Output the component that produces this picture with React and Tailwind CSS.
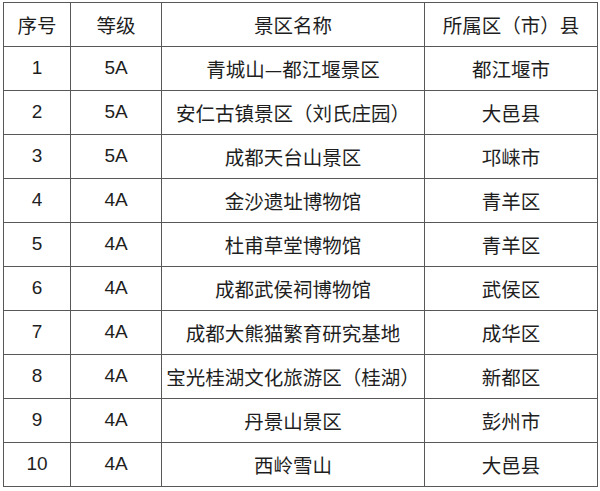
import React from "react";

const rows = [
  { id: 1, level: "5A", name: "青城山—都江堰景区", area: "都江堰市" },
  { id: 2, level: "5A", name: "安仁古镇景区（刘氏庄园）", area: "大邑县" },
  { id: 3, level: "5A", name: "成都天台山景区", area: "邛崃市" },
  { id: 4, level: "4A", name: "金沙遗址博物馆", area: "青羊区" },
  { id: 5, level: "4A", name: "杜甫草堂博物馆", area: "青羊区" },
  { id: 6, level: "4A", name: "成都武侯祠博物馆", area: "武侯区" },
  { id: 7, level: "4A", name: "成都大熊猫繁育研究基地", area: "成华区" },
  { id: 8, level: "4A", name: "宝光桂湖文化旅游区（桂湖）", area: "新都区" },
  { id: 9, level: "4A", name: "丹景山景区", area: "彭州市" },
  { id: 10, level: "4A", name: "西岭雪山", area: "大邑县" },
];

const cell = "border-[1.5px] border-[#585858] text-center align-middle p-0";

export default function App() {
  return (
    <div
      className="w-[600px] h-[491px] bg-white pt-[2px] pl-[3px]"
      style={{ fontFamily: '"Noto Sans CJK SC", "Liberation Sans", sans-serif' }}
    >
      <table className="border-collapse table-fixed w-[594px] text-[19.5px] text-[#1e1e1e]">
        <colgroup>
          <col className="w-[67px]" />
          <col className="w-[91px]" />
          <col className="w-[263px]" />
          <col className="w-[173px]" />
        </colgroup>
        <thead>
          <tr className="h-[44px]">
            <th className={`${cell} font-normal`}>序号</th>
            <th className={`${cell} font-normal`}>等级</th>
            <th className={`${cell} font-normal`}>景区名称</th>
            <th className={`${cell} font-normal`}>所属区（市）县</th>
          </tr>
        </thead>
        <tbody>
          {rows.map((r) => (
            <tr key={r.id} className="h-[44px]">
              <td className={`${cell} font-['Liberation_Sans'] text-[19px]`}>{r.id}</td>
              <td className={`${cell} font-['Liberation_Sans'] text-[19px]`}>{r.level}</td>
              <td className={cell}>{r.name}</td>
              <td className={cell}>{r.area}</td>
            </tr>
          ))}
        </tbody>
      </table>
    </div>
  );
}
